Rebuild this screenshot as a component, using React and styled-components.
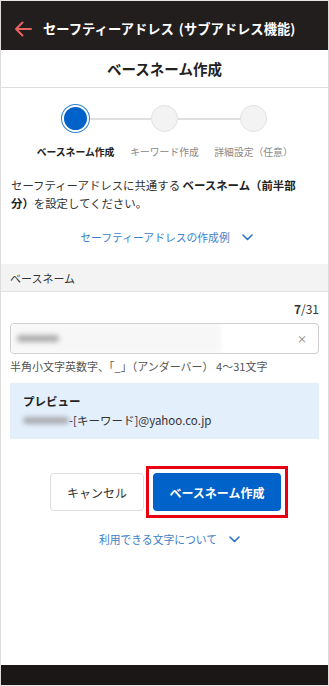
import React from "react";
import styled, { createGlobalStyle } from "styled-components";

const GlobalStyle = createGlobalStyle`
  html, body {
    margin: 0;
    padding: 0;
    background: #fff;
  }
  body {
    font-family: "Noto Sans CJK JP", "Noto Sans", sans-serif;
    color: #333;
  }
  * {
    box-sizing: border-box;
  }
`;

const steps = [
  { label: "ベースネーム作成", active: true },
  { label: "キーワード作成", active: false },
  { label: "詳細設定（任意）", active: false },
];

const App = () => {
  return (
    <>
      <GlobalStyle />
      <Page>
        <Header>
          <BackArrow width="18" height="16" viewBox="0 0 18 16">
            <path
              d="M17 8H2M8.5 1.5L2 8l6.5 6.5"
              fill="none"
              stroke="#e8625f"
              strokeWidth="2"
              strokeLinecap="round"
              strokeLinejoin="round"
            />
          </BackArrow>
          <HeaderTitle>セーフティーアドレス (サブアドレス機能)</HeaderTitle>
        </Header>
        <TitleBar>ベースネーム作成</TitleBar>

        <Stepper>
          {steps.map((s, i) => (
            <Step key={s.label}>
              <CircleRow $first={i === 0} $last={i === steps.length - 1}>
                <Circle $active={s.active} />
              </CircleRow>
              <StepLabel $active={s.active}>{s.label}</StepLabel>
            </Step>
          ))}
        </Stepper>

        <Intro>
          セーフティーアドレスに共通する <b>ベースネーム（前半部<br />分）</b>を設定してください。
        </Intro>

        <LinkRow>
          セーフティーアドレスの作成例
          <Chevron />
        </LinkRow>

        <SectionHead>ベースネーム</SectionHead>

        <Field>
          <Counter>
            <b>7</b>/31
          </Counter>
          <InputBox>
            <Blurred $w={42} />
            <Fade />
            <ClearMark>×</ClearMark>
          </InputBox>
          <Hint>半角小文字英数字、「_」（アンダーバー） 4〜31文字</Hint>
          <Preview>
            <PreviewTitle>プレビュー</PreviewTitle>
            <PreviewLine>
              <Blurred $w={46} />
              -[キーワード]@yahoo.co.jp
            </PreviewLine>
          </Preview>
        </Field>

        <Buttons>
          <CancelButton>キャンセル</CancelButton>
          <Highlight>
            <PrimaryButton>ベースネーム作成</PrimaryButton>
          </Highlight>
        </Buttons>

        <LinkRow $bottom>
          利用できる文字について
          <Chevron />
        </LinkRow>

        <Spacer />
        <Footer />
      </Page>
    </>
  );
};

const Chevron = () => (
  <ChevronSvg width="11" height="7" viewBox="0 0 11 7">
    <path
      d="M1 1l4.5 4.5L10 1"
      fill="none"
      stroke="#2a72c8"
      strokeWidth="1.6"
      strokeLinecap="round"
      strokeLinejoin="round"
    />
  </ChevronSvg>
);

export default App;

const Page = styled.div`
  width: 329px;
  height: 686px;
  display: flex;
  flex-direction: column;
  border-left: 1px solid #dcdcdc;
  border-right: 1px solid #dcdcdc;
  border-top: 1px solid #e6e6e6;
  border-bottom: 1px solid #e6e6e6;
  overflow: hidden;
`;

const Header = styled.div`
  height: 49px;
  background: #231e1e;
  display: flex;
  align-items: center;
  padding: 6px 0 0 14px;
  gap: 11px;
  margin: 0 -1px;
`;

const BackArrow = styled.svg`
  flex: none;
`;

const HeaderTitle = styled.div`
  color: #fff;
  font-size: 13.3px;
  font-weight: 700;
  white-space: nowrap;
  word-spacing: 2px;
`;

const TitleBar = styled.div`
  height: 38px;
  display: flex;
  align-items: center;
  justify-content: center;
  font-size: 14.5px;
  font-weight: 700;
  color: #222;
  border-bottom: 1px solid #dedede;
`;

const Stepper = styled.div`
  display: grid;
  grid-template-columns: repeat(3, 89px);
  justify-content: center;
  padding-top: 17px;
`;

const Step = styled.div`
  display: flex;
  flex-direction: column;
  align-items: center;
`;

const CircleRow = styled.div`
  position: relative;
  width: 100%;
  display: flex;
  justify-content: center;

  &::before {
    content: "";
    position: absolute;
    top: 13px;
    height: 2px;
    background: #e0e0e0;
    left: ${(p) => (p.$first ? "50%" : "0")};
    right: ${(p) => (p.$last ? "50%" : "0")};
  }
`;

const Circle = styled.div`
  position: relative;
  width: 27px;
  height: 27px;
  border-radius: 50%;
  background: ${(p) => (p.$active ? "#0163c9" : "#f3f3f3")};
  border: ${(p) => (p.$active ? "2px solid #fff" : "1px solid #e1e1e1")};
  box-shadow: ${(p) => (p.$active ? "0 0 0 1px #2f7fd2" : "none")};
`;

const StepLabel = styled.div`
  margin-top: 13px;
  font-size: 9.8px;
  white-space: nowrap;
  font-weight: ${(p) => (p.$active ? 700 : 400)};
  color: ${(p) => (p.$active ? "#222" : "#888")};
`;

const Intro = styled.p`
  margin: 17px 0 0;
  padding: 0 10px;
  font-size: 11.4px;
  line-height: 18px;
  color: #333;

  b {
    font-weight: 700;
    color: #222;
  }
`;

const LinkRow = styled.div`
  display: flex;
  align-items: center;
  justify-content: center;
  gap: 12px;
  font-size: 10.8px;
  color: #3d7fca;
  margin-top: ${(p) => (p.$bottom ? "20px" : "17px")};
  padding-left: ${(p) => (p.$bottom ? "10px" : "4px")};
`;

const ChevronSvg = styled.svg`
  flex: none;
`;

const SectionHead = styled.div`
  margin-top: 19px;
  height: 28px;
  display: flex;
  align-items: center;
  padding-left: 9px;
  font-size: 11px;
  color: #333;
  background: #f3f3f3;
  border-bottom: 1px solid #e2e2e2;
`;

const Field = styled.div`
  padding: 0 9px;
`;

const Counter = styled.div`
  text-align: right;
  font-size: 12px;
  color: #333;
  margin-top: 9px;
  line-height: 16px;

  b {
    font-weight: 700;
  }
`;

const InputBox = styled.div`
  position: relative;
  margin-top: 6px;
  height: 31px;
  border: 1px solid #cfcfcf;
  border-radius: 4px;
  display: flex;
  align-items: center;
  padding-left: 6px;
  background: #fff;
  overflow: hidden;
`;

const Fade = styled.div`
  position: absolute;
  left: 0;
  top: 0;
  bottom: 0;
  width: 210px;
  background: #f7f7f7;
  filter: blur(2px);
`;

const Blurred = styled.span`
  position: relative;
  z-index: 1;
  display: inline-block;
  width: ${(p) => p.$w}px;
  height: 7px;
  border-radius: 4px;
  background: #9a9a9a;
  filter: blur(2.5px);
  opacity: 0.8;
  flex: none;
`;

const ClearMark = styled.span`
  margin-left: auto;
  margin-right: 11px;
  font-size: 10px;
  color: #777;
`;

const Hint = styled.div`
  margin-top: 4px;
  font-size: 11px;
  color: #555;
  white-space: nowrap;
`;

const Preview = styled.div`
  margin-top: 9px;
  background: #e4effc;
  padding: 9px 13px 9px;
`;

const PreviewTitle = styled.div`
  font-size: 11.5px;
  font-weight: 700;
  color: #222;
  line-height: 19px;
`;

const PreviewLine = styled.div`
  display: flex;
  align-items: center;
  font-size: 11.5px;
  color: #333;
  line-height: 19px;
`;

const Buttons = styled.div`
  margin-top: 34px;
  display: flex;
  justify-content: center;
  align-items: center;
  gap: 9px;
  padding-left: 2px;
`;

const BaseButton = styled.button`
  height: 38px;
  border-radius: 4px;
  font-family: inherit;
  font-size: 12px;
  cursor: pointer;
`;

const CancelButton = styled(BaseButton)`
  width: 94px;
  background: #fff;
  border: 1px solid #dedede;
  color: #333;
`;

const Highlight = styled.div`
  outline: 3px solid #e60012;
  outline-offset: 4px;
  display: flex;
`;

const PrimaryButton = styled(BaseButton)`
  width: 128px;
  background: #0163c9;
  border: none;
  color: #fff;
  font-weight: 700;
`;

const Spacer = styled.div`
  flex: 1;
`;

const Footer = styled.div`
  height: 20px;
  background: #1a1716;
  margin: 0 -1px;
`;
